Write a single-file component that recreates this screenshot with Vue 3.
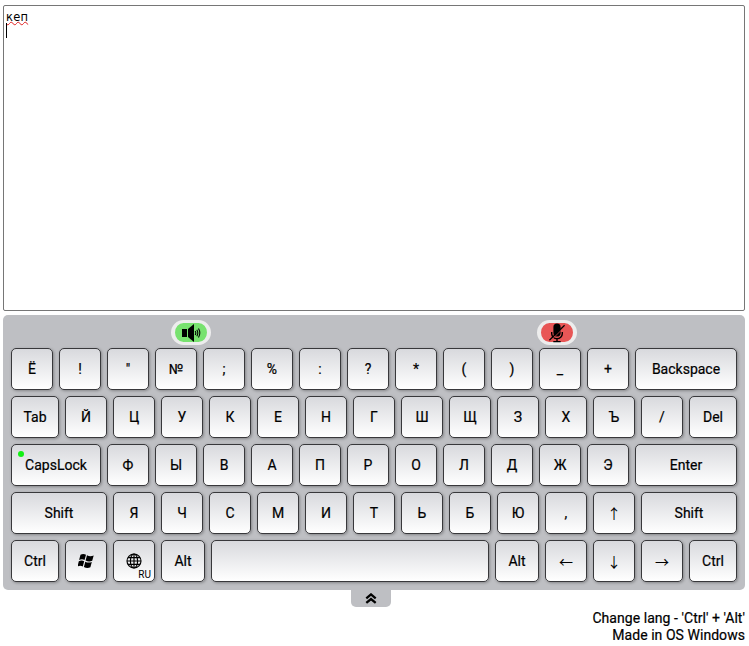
<script setup>
import { ref } from 'vue'

const text = ref('кеп')

const chars = (s) => s.split(' ').map((label) => ({ label }))
const arrows = (s) => s.split(' ').map((label) => ({ label, arrow: true }))

const rows = [
  [...chars('Ё ! " № ; % : ? * ( ) _ +'), { label: 'Backspace', size: 'w102' }],
  [{ label: 'Tab', size: 'w48' }, ...chars('Й Ц У К Е Н Г Ш Щ З Х Ъ /'), { label: 'Del', size: 'w48' }],
  [{ label: 'CapsLock', size: 'w90', led: true }, ...chars('Ф Ы В А П Р О Л Д Ж Э'), { label: 'Enter', size: 'w102' }],
  [{ label: 'Shift', size: 'w96' }, ...chars('Я Ч С М И Т Ь Б Ю ,'), ...arrows('↑'), { label: 'Shift', size: 'w96' }],
  [
    { label: 'Ctrl', size: 'w48' },
    { icon: 'win' },
    { icon: 'globe' },
    { label: 'Alt', size: 'w44' },
    { label: '', size: 'space' },
    { label: 'Alt', size: 'w44' },
    ...arrows('← ↓ →'),
    { label: 'Ctrl', size: 'w48' },
  ],
]
</script>

<template>
  <main class="page">
    <div class="editor">
      <div class="line"><span class="misspelled">{{ text }}</span></div>
      <div class="line"><i class="caret"></i></div>
    </div>

    <section class="keyboard">
      <div class="toggles">
        <button class="toggle on" aria-label="Sound">
          <svg width="20" height="20" viewBox="0 0 20 20">
            <path d="M1 6h5v8H1z" />
            <path d="M7 6l6-5v18l-6-5z" />
            <path d="M14.2 8q1.2 2 0 4M15.8 6.7q2 3.3 0 6.6M17.5 5.5q2.6 4.5 0 9" fill="none" stroke="#000" stroke-width="1.1" />
          </svg>
        </button>
        <button class="toggle off" aria-label="Microphone">
          <svg width="20" height="20" viewBox="0 0 20 20">
            <rect x="6.4" y="0.5" width="7.2" height="13" rx="3.6" />
            <path d="M4.7 9v1.8a5.3 4.8 0 0 0 10.6 0V9M10 15.5v3M6.3 18.6h7.4" fill="none" stroke="#000" stroke-width="1.4" />
            <path d="M3.3 18L18.2 3.3" stroke="#e85656" stroke-width="0.8" />
            <path d="M2.4 17.3L17.6 2.3" stroke="#000" stroke-width="1.2" />
          </svg>
        </button>
      </div>

      <div v-for="(row, r) in rows" :key="r" class="row">
        <button v-for="(key, k) in row" :key="k" class="key" :class="key.size">
          <i v-if="key.led" class="led"></i>
          <svg v-if="key.icon === 'win'" width="16" height="16" viewBox="0 0 16 16">
            <path d="M2.5 1.8Q5.2.2 8 1.7L6.5 7Q4 5.6 1.1 7.1z" />
            <path d="M9 2.3Q12.2 4 15.7 2.4L14.2 7.8Q11 9.2 7.6 7.6z" />
            <path d="M.8 8.2Q3.6 6.7 6.2 8.2L4.8 13.5Q2.2 12-.5 13.4z" />
            <path d="M7.3 8.7Q10.5 10.3 13.8 8.9L12.4 14.2Q9.3 15.8 5.9 14z" />
          </svg>
          <svg v-else-if="key.icon === 'globe'" class="globe" width="16" height="16" viewBox="0 0 16 16" fill="none" stroke="#000" stroke-width="1.15">
            <circle cx="8" cy="8" r="7" />
            <ellipse cx="8" cy="8" rx="3.6" ry="7" />
            <path d="M8 1v14M1 8h14M2 4.6h12M2 11.4h12" />
          </svg>
          <span v-else :class="key.arrow ? 'arrow' : 'label'">{{ key.label }}</span>
          <small v-if="key.icon === 'globe'" class="lang">RU</small>
        </button>
      </div>
    </section>

    <button class="collapse" aria-label="Collapse">
      <svg width="12" height="12" viewBox="0 0 12 12" fill="none" stroke="#000" stroke-width="2.3">
        <path d="M1.3 5.3L6 1.4l4.7 3.9M1.3 9.9L6 6l4.7 3.9" />
      </svg>
    </button>

    <footer class="notes">
      <p>Change lang - 'Ctrl' + 'Alt'</p>
      <p>Made in OS Windows</p>
    </footer>
  </main>
</template>

<style>
body {
  margin: 0;
  background: #fff;
}
</style>

<style scoped>
* {
  box-sizing: border-box;
}
.page {
  display: flex;
  flex-direction: column;
  width: 742px;
  margin-left: 3px;
  padding-top: 5px;
  font: 400 14px/17px Roboto, sans-serif;
  color: #000;
}
.editor {
  height: 306px;
  padding: 5px 2px;
  border: 1px solid #767676;
  border-radius: 2px;
  font: 400 11.5px/13px "DejaVu Sans", sans-serif;
}
.misspelled {
  letter-spacing: 0.2px;
  text-decoration: underline wavy #e02020 0.7px;
  text-decoration-skip-ink: none;
  text-underline-offset: 0;
}
.line {
  display: flex;
  height: 12px;
}
.caret {
  width: 1px;
  height: 15px;
  background: #000;
}
.keyboard {
  display: flex;
  flex-direction: column;
  gap: 6px;
  height: 275px;
  margin-top: 4px;
  padding: 5px 8px 8px;
  border-radius: 5px;
  background: #bebfc3;
}
.toggles {
  display: flex;
  justify-content: space-between;
  height: 25px;
  margin: 0 160px -3px;
}
.toggle {
  display: flex;
  align-items: center;
  justify-content: center;
  width: 40px;
  height: 25px;
  padding: 0;
  border: 3px solid #ededed;
  border-width: 3px 4px;
  border-radius: 12.5px;
}
.toggle svg {
  flex: none;
}
.on {
  background: #78e26f;
}
.off {
  background: #e85656;
}
.row {
  display: flex;
  gap: 6px;
  height: 42px;
}
.key {
  position: relative;
  display: flex;
  flex: none;
  align-items: center;
  justify-content: center;
  width: 42px;
  height: 42px;
  padding: 0;
  border: 1px solid #38383b;
  border-radius: 5px;
  background: linear-gradient(#d8d9dd, #fff);
  box-shadow: 1px 1px 3px rgba(0, 0, 0, 0.3);
  font: inherit;
  color: inherit;
}
.w44 { width: 44px; }
.w48 { width: 48px; }
.w90 { width: 90px; }
.w96 { width: 96px; }
.w102 { width: 102px; }
.space { width: 278px; }
.label,
.notes {
  -webkit-text-stroke: 0.2px #000;
}
.arrow {
  font-family: "Noto Sans CJK JP", sans-serif;
}
.globe {
  margin-right: 1px;
}
.led {
  position: absolute;
  top: 6px;
  left: 6px;
  width: 6px;
  height: 6px;
  border-radius: 50%;
  background: #12f012;
}
.lang {
  position: absolute;
  right: 3px;
  bottom: 0;
  font-size: 10px;
  line-height: 12px;
}
.collapse {
  display: flex;
  align-items: center;
  justify-content: center;
  align-self: center;
  width: 40px;
  height: 17px;
  margin-right: 6px;
  padding: 0;
  border: 0;
  border-radius: 0 0 5px 5px;
  background: #bebfc3;
}
.notes {
  margin-top: 3px;
  letter-spacing: 0.05px;
  text-align: right;
}
.notes p {
  margin: 0;
}
</style>
